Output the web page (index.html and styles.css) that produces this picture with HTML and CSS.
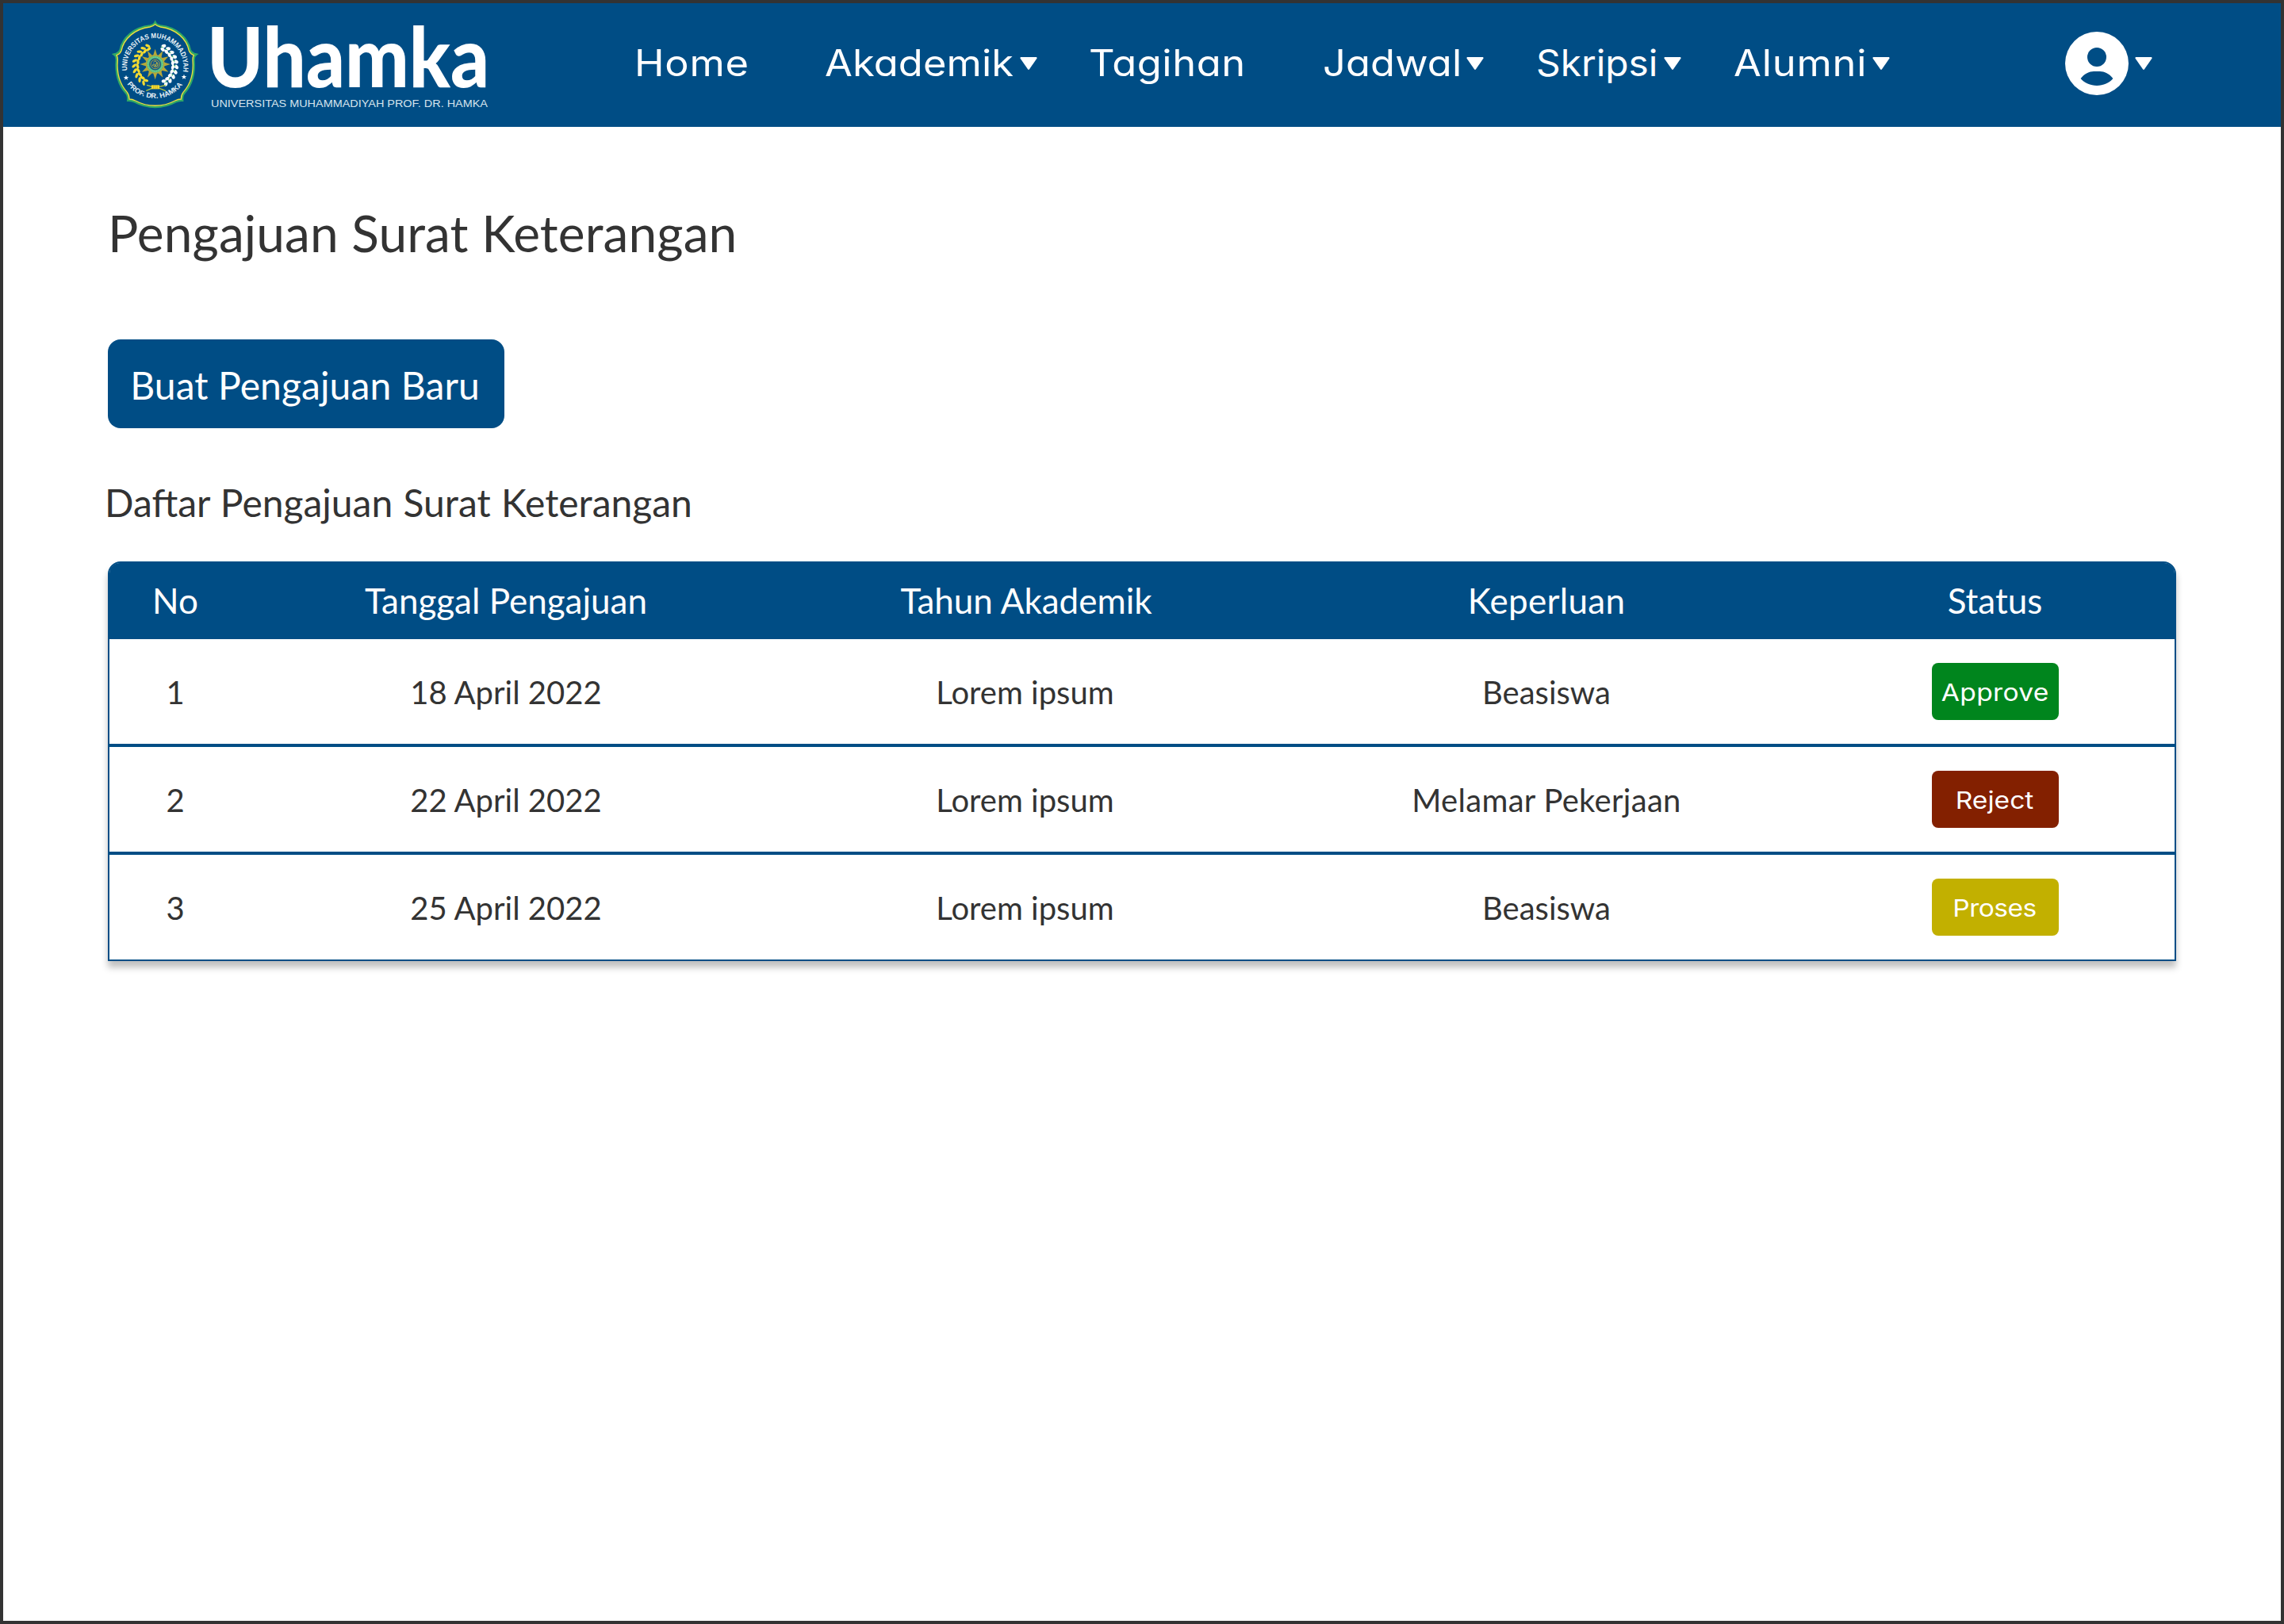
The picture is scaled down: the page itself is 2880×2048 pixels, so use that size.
FILE: index.html
```html
<!DOCTYPE html>
<html lang="id">
<head>
<meta charset="utf-8">
<title>Pengajuan Surat Keterangan</title>
<link rel="stylesheet" href="styles.css">
</head>
<body>
<svg width="0" height="0" class="defs">
  <defs>
    <symbol id="caret" viewBox="0 0 22 16"><path d="M1.2 0H20.8Q22 .6 21.4 1.8L12 15.2Q11 16.6 10 15.2L.6 1.8Q0 .6 1.2 0Z" fill="#fff"/></symbol>
    <g id="grain"><ellipse cx="173" cy="109" rx="10" ry="5" transform="rotate(40 173 109)"/><ellipse cx="173" cy="122" rx="10" ry="5" transform="rotate(-25 173 122)"/></g>
    <g id="boll"><ellipse cx="190" cy="108" rx="9" ry="6.500" transform="rotate(-40 190 108)" fill="#fff"/><ellipse cx="190" cy="121" rx="9" ry="6" transform="rotate(25 190 121)" fill="#fff"/><path d="M182 111l8 2-7 5z" fill="#3fb56b"/></g>
    <path id="ray" d="M182 125l8 26h-16z"/>
    <path id="star" d="M0-10 2.600-3.200 10-3 4 1.400 6.200 8.500 0 4.400-6.200 8.500-4 1.400-10-3-2.600-3.200Z"/>
  </defs>
</svg>
<div class="page">
  <header class="topbar">
    <div class="brand">
      <svg class="emblem" viewBox="0 0 360 360">
        <path d="M182 25Q187 35 202 38C263 45 305 83 314 129Q320 142 337 146Q328 152 328 166C332 213 321 260 292 292Q283 302 285 320Q271 319 259 325C212 351 152 351 105 325Q93 319 79 320Q81 302 72 292C43 260 32 213 36 166Q36 152 27 146Q44 142 50 129C59 83 101 45 162 38Q177 35 182 25Z" fill="none" stroke="#2fa866" stroke-width="8"/>
        <path d="M182 32Q188 39 202 42C259 49 301 86 310 132Q315 144 328 149Q324 155 324 166C328 211 317 257 288 289Q280 299 280 315Q268 315 257 321C211 346 153 346 107 321Q96 315 84 315Q84 299 76 289C47 257 36 211 40 166Q40 155 36 149Q49 144 54 132C63 86 105 49 162 42Q176 39 182 32Z" fill="none" stroke="#f0e03c" stroke-width="4"/>
        <path id="arcTop" d="M76 207A107 108 0 1 1 288 207" fill="none"/>
        <path id="arcBottom" d="M76 258A130 130 0 0 0 290 254" fill="none"/>
        <text class="emblem-text"><textPath href="#arcTop" textLength="372" lengthAdjust="spacingAndGlyphs">UNIVERSITAS MUHAMMADIYAH</textPath></text>
        <text class="emblem-text"><textPath href="#arcBottom" textLength="244" lengthAdjust="spacingAndGlyphs">PROF. DR. HAMKA</textPath></text>
        <use href="#star" x="72" y="234" fill="#fff"/><use href="#star" x="291" y="231" fill="#fff"/>
        <g fill="#f3da31">
          <use href="#grain" transform="rotate(-14 182 188)"/><use href="#grain" transform="rotate(-28 182 188)"/><use href="#grain" transform="rotate(-42 182 188)"/><use href="#grain" transform="rotate(-56 182 188)"/><use href="#grain" transform="rotate(-70 182 188)"/><use href="#grain" transform="rotate(-84 182 188)"/><use href="#grain" transform="rotate(-98 182 188)"/><use href="#grain" transform="rotate(-112 182 188)"/><use href="#grain" transform="rotate(-126 182 188)"/><use href="#grain" transform="rotate(-140 182 188)"/>
        </g>
        <use href="#boll" transform="rotate(18 182 188)"/><use href="#boll" transform="rotate(32 182 188)"/><use href="#boll" transform="rotate(46 182 188)"/><use href="#boll" transform="rotate(60 182 188)"/><use href="#boll" transform="rotate(74 182 188)"/><use href="#boll" transform="rotate(88 182 188)"/><use href="#boll" transform="rotate(102 182 188)"/><use href="#boll" transform="rotate(116 182 188)"/><use href="#boll" transform="rotate(130 182 188)"/><use href="#boll" transform="rotate(144 182 188)"/>
        <path d="M150 262L172 268M148 283L170 274M198 268L222 262M198 274L222 284" stroke="#b9c83a" stroke-width="4" fill="none"/>
        <rect x="168" y="262" width="30" height="15" fill="#f3da31"/>
        <path d="M176 262v15M183 262v15M190 262v15" stroke="#a9982a" stroke-width="1.500"/>
        <g fill="#b5a83a">
          <use href="#ray"/><use href="#ray" transform="rotate(30 182 183)"/><use href="#ray" transform="rotate(60 182 183)"/><use href="#ray" transform="rotate(90 182 183)"/><use href="#ray" transform="rotate(120 182 183)"/><use href="#ray" transform="rotate(150 182 183)"/><use href="#ray" transform="rotate(180 182 183)"/><use href="#ray" transform="rotate(210 182 183)"/><use href="#ray" transform="rotate(240 182 183)"/><use href="#ray" transform="rotate(270 182 183)"/><use href="#ray" transform="rotate(300 182 183)"/><use href="#ray" transform="rotate(330 182 183)"/>
          <circle cx="182" cy="183" r="36"/>
        </g>
        <circle cx="182" cy="183" r="27" fill="#14568a" stroke="#56bf7d" stroke-width="9"/>
        <circle cx="182" cy="183" r="27" fill="none" stroke="#8fd6a4" stroke-width="3" stroke-dasharray="4 3"/>
        <circle cx="182" cy="183" r="17" fill="none" stroke="#a9a63f" stroke-width="3"/>
        <path d="M172 190q4-14 8-4t6-6q4-8 6 2t-6 10q-8 4-10-4M176 176l6-6 6 6" fill="none" stroke="#c9bd3a" stroke-width="3"/>
      </svg>
      <svg class="wordmark" viewBox="0 0 352 116">
        <text class="word" x="-4" y="86" textLength="356" lengthAdjust="spacingAndGlyphs">Uhamka</text>
        <text class="subword" x="1" y="110.500" textLength="349" lengthAdjust="spacingAndGlyphs">UNIVERSITAS MUHAMMADIYAH PROF. DR. HAMKA</text>
      </svg>
    </div>
    <nav class="menu">
      <a class="item home"><span class="label">Home</span></a>
      <a class="item akademik"><span class="label">Akademik</span><svg class="caret"><use href="#caret"/></svg></a>
      <a class="item tagihan"><span class="label">Tagihan</span></a>
      <a class="item jadwal"><span class="label">Jadwal</span><svg class="caret"><use href="#caret"/></svg></a>
      <a class="item skripsi"><span class="label">Skripsi</span><svg class="caret"><use href="#caret"/></svg></a>
      <a class="item alumni"><span class="label">Alumni</span><svg class="caret"><use href="#caret"/></svg></a>
    </nav>
    <div class="account">
      <svg class="avatar" viewBox="0 0 80 80"><circle cx="40" cy="40" r="40" fill="#fff"/><circle cx="40" cy="32" r="12" fill="#004d85"/><path d="M19.600 59C24 53 31 50 36 50H44C49 50 56 53 60.400 59C56 64.500 48 68 40 68S24 64.500 19.600 59Z" fill="#004d85"/></svg>
      <svg class="caret"><use href="#caret"/></svg>
    </div>
  </header>
  <main class="content">
    <h1 class="title">Pengajuan Surat Keterangan</h1>
    <button class="create">Buat Pengajuan Baru</button>
    <h2 class="subtitle">Daftar Pengajuan Surat Keterangan</h2>
    <section class="table">
      <div class="row head"><div>No</div><div>Tanggal Pengajuan</div><div>Tahun Akademik</div><div class="loose">Keperluan</div><div>Status</div></div>
      <div class="row"><div>1</div><div>18 April 2022</div><div class="year">Lorem ipsum</div><div>Beasiswa</div><div><span class="badge approve"><span class="badge-label">Approve</span></span></div></div>
      <div class="row"><div>2</div><div>22 April 2022</div><div class="year">Lorem ipsum</div><div class="loose">Melamar Pekerjaan</div><div><span class="badge reject"><span class="badge-label">Reject</span></span></div></div>
      <div class="row"><div>3</div><div>25 April 2022</div><div class="year">Lorem ipsum</div><div>Beasiswa</div><div><span class="badge proses"><span class="badge-label">Proses</span></span></div></div>
    </section>
  </main>
</div>
</body>
</html>
```
FILE: styles.css
```css
* { box-sizing: border-box; }
body { margin: 0; background: #fff; color: #333; font-family: "Lato", sans-serif; }
.defs { display: block; }
.page { width: 2880px; height: 2048px; border: 4px solid #333; overflow: hidden; }
.topbar { display: flex; height: 156px; background: #004d85; color: #fff; }
.brand { display: flex; width: 796px; padding: 16px 0 0 131px; }
.emblem { width: 120px; height: 120px; }
.emblem-text { font: bold 27px "Liberation Sans Narrow", "Liberation Sans", sans-serif; fill: #e8f1f6; }
.wordmark { width: 352px; height: 116px; margin-left: 10px; margin-top: 4px; overflow: visible; }
.word { font: 900 104px "Lato", sans-serif; fill: #fff; }
.subword { font: 13.600px "Liberation Sans", sans-serif; fill: #d5e3ec; }
.menu { display: flex; width: 1804px; font: 400 46px/150px "Inter", sans-serif; font-feature-settings: "cv11" 1; }
.item { display: flex; align-items: flex-start; justify-content: space-between; height: 156px; }
.label { transform: scaleX(1.1); transform-origin: left; letter-spacing: .1px; }
.caret { display: block; flex: none; width: 22px; height: 16px; margin-top: 68px; }
.home { width: 240px; }
.home .label, .alumni .label { letter-spacing: .7px; }
.akademik { width: 268px; margin-right: 65px; }
.tagihan { width: 295px; }
.tagihan .label { letter-spacing: .5px; }
.jadwal { width: 203px; margin-right: 66px; }
.skripsi { width: 183px; margin-right: 66px; }
.skripsi .label { transform: scaleX(1.04); letter-spacing: 0; }
.alumni { width: 197px; }
.account { display: flex; gap: 8px; }
.avatar { width: 80px; height: 80px; margin-top: 36px; }
.content { padding: 0 132px; }
.title { margin: 96px 0 0; font-weight: 400; font-size: 64px; line-height: 76px; letter-spacing: .1px; }
.create { display: flex; align-items: center; justify-content: center; width: 500px; height: 112px; margin-top: 96px; padding: 4px 3px 0 0; border: 0; border-radius: 16px; background: #004d85; color: #fff; font: 400 48px/58px "Lato", sans-serif; letter-spacing: .1px; }
.subtitle { margin: 65px 0 0 -4px; font-weight: 400; font-size: 48px; line-height: 58px; word-spacing: 1px; }
.table { width: 2608px; margin-top: 45px; border: 2px solid #004d85; border-radius: 16px 16px 0 0; background: #fff; box-shadow: 0 8px 8px rgba(0,0,0,.25); font-size: 40px; }
.row { display: grid; grid-template-columns: 166px 668px 644px 668px 458px; height: 136px; border-bottom: 4px solid #004d85; align-items: center; text-align: center; }
.row > div { padding-top: 2px; }
.row > div:last-child { padding: 0 0 0 5px; }
.row:last-child { height: 132px; border-bottom: 0; }
.row.head { height: 96px; padding-bottom: 2px; border: 0; background: #004d85; color: #fff; border-radius: 13px 13px 0 0; font-size: 44px; }
.row.head > div { padding-top: 0; }
.row > .year { padding-right: 3px; }
.loose { letter-spacing: .3px; }
.badge { display: flex; align-items: center; justify-content: center; width: 160px; height: 72px; margin: 0 auto; padding-top: 2px; border-radius: 8px; color: #fff; font: 400 30px/36px "Inter", sans-serif; font-feature-settings: "cv11" 1; }
.badge-label { transform: scaleX(1.12); }
.approve { background: #00851d; letter-spacing: .3px; }
.reject { background: #832000; }
.proses { background: #c2b000; letter-spacing: -.5px; }
```
